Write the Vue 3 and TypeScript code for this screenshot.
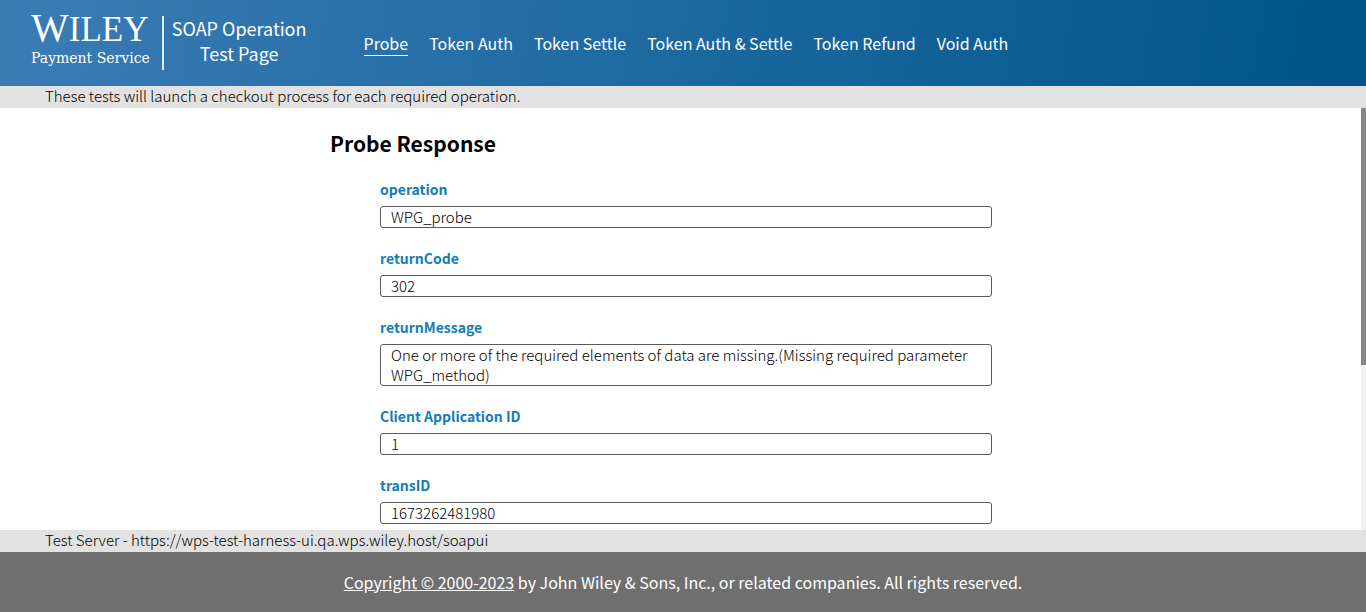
<script setup lang="ts">
interface Field {
  id: string
  label: string
  value: string
  rows: number
}

const operations: string[] = [
  'Probe',
  'Token Auth',
  'Token Settle',
  'Token Auth & Settle',
  'Token Refund',
  'Void Auth',
]

const activeOperation = 'Probe'

const fields: Field[] = [
  { id: 'operation', label: 'operation', value: 'WPG_probe', rows: 1 },
  { id: 'return-code', label: 'returnCode', value: '302', rows: 1 },
  {
    id: 'return-message',
    label: 'returnMessage',
    value:
      'One or more of the required elements of data are missing.(Missing required parameter WPG_method)',
    rows: 2,
  },
  { id: 'client-application', label: 'Client Application ID', value: '1', rows: 1 },
  { id: 'trans-id', label: 'transID', value: '1673262481980', rows: 1 },
]
</script>

<template>
  <div class="page">
    <header class="header">
      <div class="brand">
        <div class="logo">
          <span class="logo-name"><span class="logo-initial">W</span>ILEY</span>
          <span class="logo-service">Payment Service</span>
        </div>
        <div class="title">SOAP Operation<br />Test Page</div>
      </div>
      <nav class="nav">
        <a
          v-for="name in operations"
          :key="name"
          href="#"
          class="nav-link"
          :class="{ active: name === activeOperation }"
          >{{ name }}</a
        >
      </nav>
    </header>
    <div class="strip">These tests will launch a checkout process for each required operation.</div>
    <div class="body">
      <main class="content">
        <section class="response">
          <h2 class="heading">Probe Response</h2>
          <div class="fields">
            <div v-for="field in fields" :key="field.id" class="field">
              <label class="label" :for="field.id">{{ field.label }}</label>
              <textarea
                v-if="field.rows > 1"
                :id="field.id"
                class="box"
                :rows="field.rows"
                :value="field.value"
                readonly
              ></textarea>
              <input v-else :id="field.id" class="box" type="text" :value="field.value" readonly />
            </div>
          </div>
        </section>
      </main>
      <div class="scroll-track" aria-hidden="true">
        <div class="scroll-thumb"></div>
      </div>
    </div>
    <div class="strip">Test Server - https://wps-test-harness-ui.qa.wps.wiley.host/soapui</div>
    <footer class="footer">
      <p class="copyright">
        <a href="#" class="copyright-link">Copyright © 2000-2023</a> by John Wiley &amp; Sons, Inc.,
        or related companies. All rights reserved.
      </p>
    </footer>
  </div>
</template>

<style>
body {
  margin: 0;
}
</style>

<style scoped>
.page {
  display: flex;
  flex-direction: column;
  height: 100vh;
  background: #fff;
  color: #000;
  font-family: 'Noto Sans CJK SC', 'Noto Sans', sans-serif;
  font-size: 15px;
  font-weight: 300;
  line-height: 20px;
}

.header {
  display: flex;
  flex: none;
  align-items: center;
  gap: 57px;
  box-sizing: border-box;
  height: 86px;
  padding-left: 31px;
  background: linear-gradient(100deg, #3b7cb5, #00568b 96%);
  color: #fff;
  font-weight: 400;
}

.brand {
  display: flex;
  align-items: center;
}

.logo {
  display: flex;
  flex-direction: column;
  box-sizing: border-box;
  height: 54px;
  padding-right: 12px;
  border-right: 2px solid #e3edf6;
}

.logo-name {
  font-family: 'Liberation Serif', serif;
  font-size: 35px;
  line-height: 24px;
}

.logo-initial {
  font-size: 40px;
}

.logo-service {
  margin-top: 6px;
  font-family: 'DejaVu Serif', serif;
  font-size: 14px;
  line-height: 20px;
}

.title {
  padding: 0 0 4px 8px;
  font-size: 18px;
  line-height: 25px;
  text-align: center;
}

.nav {
  display: flex;
  gap: 21px;
}

.nav-link {
  border-bottom: 1px solid transparent;
  color: #fff;
  font-size: 16px;
  line-height: 24px;
  text-decoration: none;
}

.nav-link.active {
  border-bottom-color: #fff;
}

.strip {
  flex: none;
  padding: 0 45px 2px;
  background: #e2e2e2;
}

.body {
  display: flex;
  flex: 1;
  min-height: 0;
}

.content {
  flex: 1;
  overflow-y: auto;
  scrollbar-width: none;
}

.scroll-track {
  flex: none;
  width: 5px;
  background: #f1f1f1;
}

.scroll-thumb {
  height: 61%;
  background: #888;
}

.response {
  max-width: 701px;
  margin: 0 auto;
  padding: 19px 0 274px;
}

.heading {
  margin: 0;
  font-size: 21px;
  font-weight: 700;
  line-height: 32px;
}

.fields {
  display: flex;
  flex-direction: column;
  gap: 20px;
  padding: 20px 39px 0 50px;
}

.field {
  display: flex;
  flex-direction: column;
  gap: 7px;
}

.label {
  color: #147db5;
  font-size: 14px;
  font-weight: 700;
}

.box {
  display: block;
  box-sizing: border-box;
  width: 100%;
  margin: 0;
  padding: 0 10px;
  border: 1px solid #5a5a5a;
  border-radius: 3px;
  outline: none;
  background: #fff;
  color: #000;
  font: inherit;
  resize: none;
  overflow: hidden;
}

.footer {
  display: flex;
  flex: none;
  align-items: center;
  justify-content: center;
  height: 60px;
  background: #6f6f6f;
  color: #fff;
  font-weight: 400;
}

.copyright {
  margin: 0;
  font-size: 16px;
  line-height: 24px;
}

.copyright-link {
  color: inherit;
}
</style>
